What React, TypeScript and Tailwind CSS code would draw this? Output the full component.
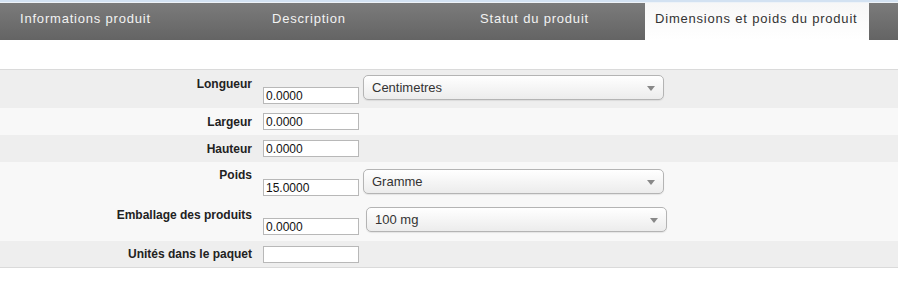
import React from 'react';

const tabs = [
  { label: 'Informations produit', w: 'w-[252px]', pl: 'pl-[20px]' },
  { label: 'Description', w: 'w-[208px]', pl: 'pl-[20px]' },
  { label: 'Statut du produit', w: 'w-[185px]', pl: 'pl-[20px]' },
];

const Select = ({ value, className = '' }: { value: string; className?: string }) => (
  <div
    className={`relative h-[25px] w-[301px] rounded-[5px] border border-[#b4b4b4] bg-gradient-to-b from-white to-[#ececec] pl-[8px] text-[13px] leading-[23px] text-[#333] shadow-[0_1px_1px_rgba(0,0,0,0.08)] ${className}`}
  >
    {value}
    <span className="absolute right-[8px] top-[10px] h-0 w-0 border-x-[4px] border-t-[5px] border-x-transparent border-t-[#888]" />
  </div>
);

const Input = ({ value, className = '' }: { value: string; className?: string }) => (
  <div
    className={`h-[17px] w-[96px] border border-[#b8b8b8] bg-white pl-[2px] text-[12px] leading-[17px] text-[#111] ${className}`}
  >
    {value}
  </div>
);

// label column ends at x=253
const Label = ({ text }: { text: string }) => (
  <div className="w-[253px] shrink-0 pr-[1px] text-right text-[12px] font-bold text-[#222]">{text}</div>
);

export default function App() {
  return (
    <div className="h-[306px] w-[898px] bg-white font-['Liberation_Sans',Arial,sans-serif]">
      <div className="h-[2px] bg-[#d3e2f2]" />
      <div className="h-[1px] bg-[#eef3f8]" />
      <div className="flex h-[37px] bg-gradient-to-b from-[#7b7b7b] to-[#646464]">
        {tabs.map((t) => (
          <div key={t.label} className={`${t.w} ${t.pl} pt-[6px] text-[13px] tracking-[0.8px] text-[#f2f2f2]`}>
            {t.label}
          </div>
        ))}
        <div className="w-[224px] bg-gradient-to-b from-[#f7f7f7] to-white pl-[10px] pt-[6px] text-[13px] tracking-[0.8px] text-[#333]">
          Dimensions et poids du produit
        </div>
      </div>
      <div className="h-[29px]" />
      <div className="border-y border-[#dadada]">
        <div className="flex h-[38px] bg-[#eeeeee]">
          <div className="pt-[5px]"><Label text="Longueur" /></div>
          <Input value="0.0000" className="ml-[10px] mt-[17px]" />
          <Select value="Centimetres" className="ml-[4px] mt-[5px]" />
        </div>
        <div className="flex h-[27px] items-center bg-[#f8f8f8]">
          <Label text="Largeur" />
          <Input value="0.0000" className="ml-[10px]" />
        </div>
        <div className="flex h-[27px] items-center bg-[#eeeeee]">
          <Label text="Hauteur" />
          <Input value="0.0000" className="ml-[10px]" />
        </div>
        <div className="flex h-[40px] bg-[#f8f8f8]">
          <div className="pt-[4px]"><Label text="Poids" /></div>
          <Input value="15.0000" className="ml-[10px] mt-[17px]" />
          <Select value="Gramme" className="ml-[4px] mt-[7px]" />
        </div>
        <div className="flex h-[39px] bg-[#f8f8f8]">
          <div className="pt-[4px]"><Label text="Emballage des produits" /></div>
          <Input value="0.0000" className="ml-[10px] mt-[16px]" />
          <Select value="100 mg" className="ml-[7px] mt-[5px]" />
        </div>
        <div className="flex h-[26px] items-center bg-[#eeeeee]">
          <Label text="Unités dans le paquet" />
          <Input value="" className="ml-[10px]" />
        </div>
      </div>
    </div>
  );
}
